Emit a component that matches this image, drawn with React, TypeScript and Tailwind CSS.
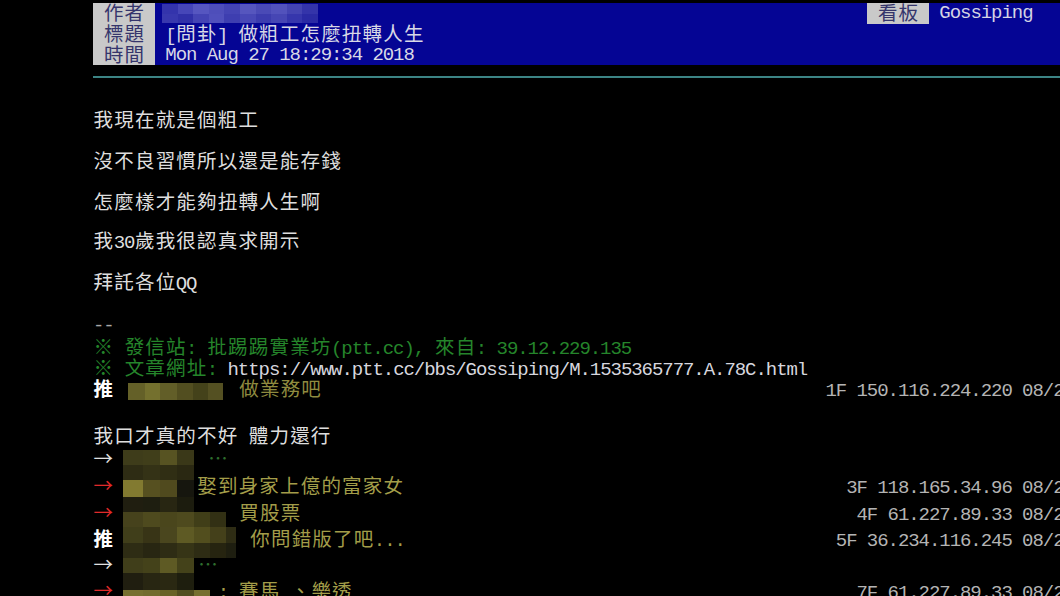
import React from "react";

function isWide(ch: string) {
  const c = ch.codePointAt(0) || 0;
  return c >= 0x2000;
}

function T({ s, className = "" }: { s: string; className?: string }) {
  const parts: React.ReactNode[] = [];
  let buf = "";
  let k = 0;
  const flush = () => {
    if (buf) {
      parts.push(
        <span
          key={k++}
          className="inline-block font-['Liberation_Mono',monospace] text-[19px] tracking-[-1.05px] leading-none"
        >
          {buf}
        </span>
      );
      buf = "";
    }
  };
  for (const ch of Array.from(s)) {
    if (isWide(ch)) {
      flush();
      parts.push(
        <span
          key={k++}
          className="inline-block w-[20.7px] text-center font-['Noto_Sans_CJK_TC','Noto_Sans_CJK_SC',sans-serif] text-[19.5px] leading-none"
        >
          {ch}
        </span>
      );
    } else buf += ch;
  }
  flush();
  return <span className={`whitespace-pre leading-none ${className}`}>{parts}</span>;
}

function Label({ text }: { text: string }) {
  return (
    <div className="w-[62px] shrink-0 bg-[#c9c9c9] text-[#35356c] flex items-center justify-center overflow-hidden">
      <T s={text} />
    </div>
  );
}

const hTop = ["#3434ac", "#4646b8", "#5656c0", "#4e4eba", "#4444b4", "#5656be", "#4a4ab6", "#5252bc", "#4444b2", "#3434aa"];
const hBot = ["#3838ae", "#3030a8", "#4444b4", "#5050bc", "#3e3eb0", "#4848b6", "#3c3cae", "#4646b4", "#3636ac", "#2a2aa4"];

function HeaderMosaic() {
  return (
    <div className="flex flex-col">
      {[hTop, hBot].map((row, i) => (
        <div key={i} className="flex h-[9.5px]">
          {row.map((c, j) => (
            <div key={j} className="w-[15.6px] h-full" style={{ backgroundColor: c }} />
          ))}
        </div>
      ))}
    </div>
  );
}

const colW = [20, 17, 17, 17, 16, 16, 10];
const mrows = [
  { y: 450, h: 15, c: ["#3e3c1a", "#403e1a", "#575322", "#3a3818"] },
  { y: 465, h: 15, c: ["#2e2c14", "#343216", "#302e14", "#2a2812"] },
  { y: 480, h: 17, c: ["#827a30", "#565020", "#504a1e", "#16160e"] },
  { y: 497, h: 15, c: ["#201e10", "#1e1e10", "#282612", "#1c1c0e"] },
  { y: 512, h: 15, c: ["#46421c", "#4e4a1e", "#4a461c", "#4e4a1e", "#403e18", "#323014"] },
  { y: 527, h: 16, c: ["#403e1a", "#383416", "#4a461e", "#5e5a24", "#524e1e", "#44401a", "#2e2c14"] },
  { y: 543, h: 15, c: ["#2e2c14", "#282612", "#2e2c14", "#363416", "#2e2c14", "#262410", "#1e1e10"] },
  { y: 558, h: 15, c: ["#403e1a", "#44421a", "#5e5a24", "#44421a"] },
  { y: 573, h: 17, c: ["#201e10", "#282612", "#2a2812", "#1e1e0e"] },
  { y: 590, h: 8, c: ["#767030", "#726c2e", "#686226", "#524e20", "#767030"] },
];

const m1W = [17, 15, 17, 16, 15, 15];
const m1C = ["#646028", "#74702e", "#625e28", "#524e20", "#44421a", "#545022"];

function Push({
  h,
  tag,
  tagCls,
  slot,
  children,
  right,
}: {
  h: string;
  tag: string;
  tagCls: string;
  slot: string;
  children?: React.ReactNode;
  right?: string;
}) {
  return (
    <div className={`${h} flex items-center justify-between`}>
      <div className="flex items-center">
        <span className={tagCls}>
          <T s={tag} />
        </span>
        <div className={`${slot} shrink-0`} />
        {children}
      </div>
      {right && (
        <span className="text-[#b4b4b4]">
          <T s={right} />
        </span>
      )}
    </div>
  );
}

const body = ["我現在就是個粗工", "沒不良習慣所以還是能存錢", "怎麼樣才能夠扭轉人生啊", "我30歲我很認真求開示", "拜託各位QQ"];

export default function App() {
  return (
    <div className="relative w-[1060px] h-[596px] overflow-hidden bg-black text-[#dedede]">
      <div className="w-[1136px] pl-[93px] pt-[3px] flex flex-col">
        {/* header */}
        <div className="flex h-[21px]">
          <Label text=" 作者 " />
          <div className="w-[712px] shrink-0 bg-[#050594] flex items-center pl-[7px]">
            <HeaderMosaic />
          </div>
          <Label text=" 看板 " />
          <div className="flex-1 bg-[#050594] flex items-center text-[#d4d4e4]">
            <T s=" Gossiping" />
          </div>
        </div>
        <div className="flex h-[21px]">
          <Label text=" 標題 " />
          <div className="flex-1 bg-[#050594] flex items-center text-[#d8d8e6]">
            <T s=" [問卦] 做粗工怎麼扭轉人生" />
          </div>
        </div>
        <div className="flex h-[20px]">
          <Label text=" 時間 " />
          <div className="flex-1 bg-[#050594] flex items-center text-[#d8d8e6]">
            <T s=" Mon Aug 27 18:29:34 2018" />
          </div>
        </div>
        <div className="mt-[11px] h-[2px] bg-[#3c8484]" />

        {/* body */}
        <div className="mt-[20px] flex flex-col">
          {body.map((l, i) => (
            <div key={i} className="h-[41px] flex items-center">
              <T s={l} />
            </div>
          ))}
        </div>

        <div className="mt-[13px] h-[21px] flex items-center text-[#a8a8a8]">
          <T s="--" />
        </div>
        <div className="h-[21px] flex items-center text-[#25852b]">
          <T s="※ 發信站: 批踢踢實業坊(ptt.cc), 來自: 39.12.229.135" />
        </div>
        <div className="h-[21px] flex items-center">
          <span className="text-[#25852b]">
            <T s="※ 文章網址: " />
          </span>
          <span className="text-[#d6d6de]">
            <T s="https://www.ptt.cc/bbs/Gossiping/M.1535365777.A.78C.html" />
          </span>
        </div>
        <Push h="h-[22px]" tag="推" tagCls="text-white font-semibold" slot="w-[125px]" right="1F 150.116.224.220 08/27 18:31">
          <span className="text-[#8f8b3f]">
            <T s="做業務吧" />
          </span>
        </Push>
        <div className="h-[23px]" />
        <div className="h-[24px] flex items-center">
          <T s="我口才真的不好 體力還行" />
        </div>
        <Push h="h-[24px]" tag="→" tagCls="text-[#e0e0e0]" slot="w-[94px]">
          <span className="text-[#2e6e2e]">
            <T s="⋯" />
          </span>
        </Push>
        <Push h="h-[29px]" tag="→" tagCls="text-[#e02a2a]" slot="w-[83px]" right="3F 118.165.34.96 08/27 18:32">
          <span className="text-[#a39d49]">
            <T s="娶到身家上億的富家女" />
          </span>
        </Push>
        <Push h="h-[25px]" tag="→" tagCls="text-[#e02a2a]" slot="w-[125px]" right="4F 61.227.89.33 08/27 18:33">
          <span className="text-[#a39d49]">
            <T s="買股票" />
          </span>
        </Push>
        <Push h="h-[27px]" tag="推" tagCls="text-white font-semibold" slot="w-[136px]" right="5F 36.234.116.245 08/27 18:33">
          <span className="text-[#a39d49]">
            <T s="你問錯版了吧..." />
          </span>
        </Push>
        <Push h="h-[26px]" tag="→" tagCls="text-[#e0e0e0]" slot="w-[84px]">
          <span className="text-[#2e6e2e]">
            <T s="⋯" />
          </span>
        </Push>
        <Push h="h-[26px]" tag="→" tagCls="text-[#e02a2a]" slot="w-[104px]" right="7F 61.227.89.33 08/27 18:34">
          <span className="text-[#a39d49]">
            <T s=": 賽馬 、樂透" />
          </span>
        </Push>
      </div>

      {/* censor mosaics */}
      <div className="absolute left-[128px] top-[383px] flex h-[17px]">
        {m1W.map((w, i) => (
          <div key={i} className="h-full" style={{ width: w, backgroundColor: m1C[i] }} />
        ))}
      </div>
      {mrows.map((r, i) => (
        <div key={i} className="absolute left-[123px] flex" style={{ top: r.y, height: r.h }}>
          {r.c.map((c, j) => (
            <div key={j} className="h-full" style={{ width: colW[j], backgroundColor: c }} />
          ))}
        </div>
      ))}
    </div>
  );
}
